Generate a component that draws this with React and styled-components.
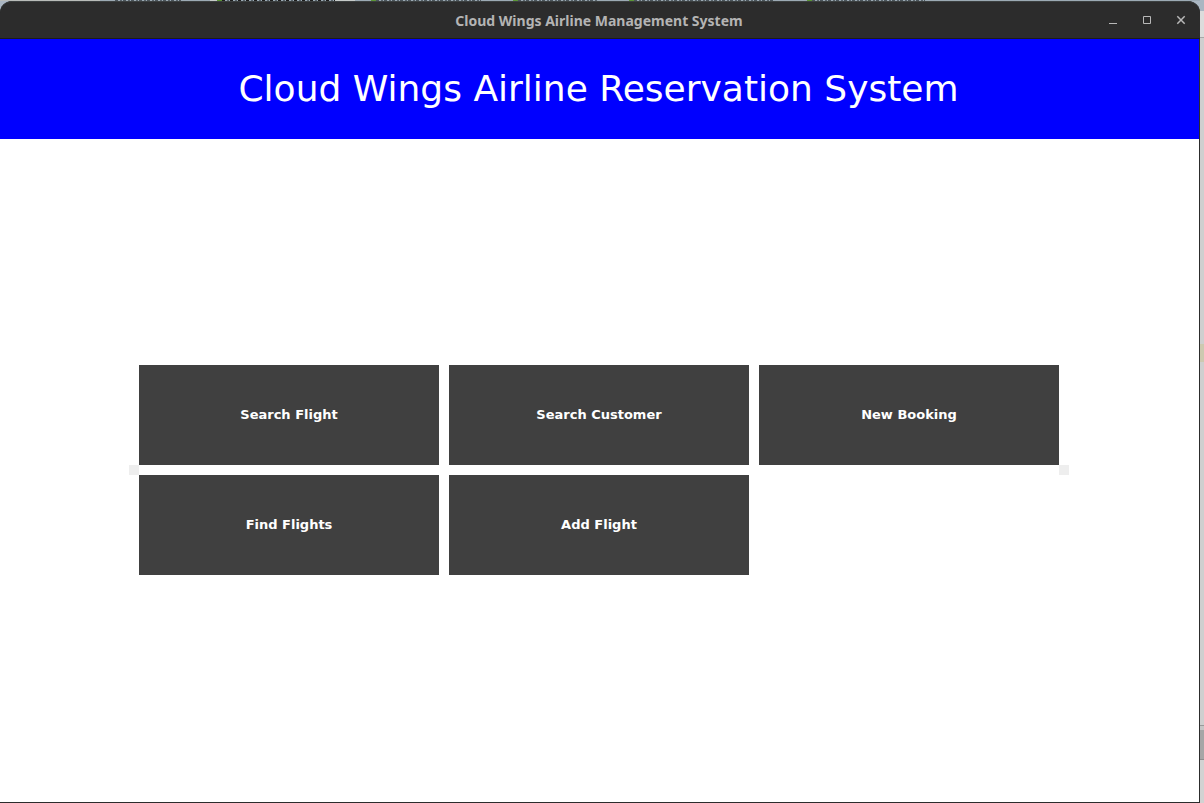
import React from "react";
import styled, { createGlobalStyle } from "styled-components";

const GlobalStyle = createGlobalStyle`
  * { box-sizing: border-box; }
  body { margin: 0; }
`;

const Desktop = styled.div`
  min-height: 100vh;
  display: flex;
  flex-direction: column;
  padding-right: 4px;
  background: linear-gradient(
    #aab6c2 0 11px,
    #dcdcdc 11px 37px,
    #a8a8a8 37px 38px,
    #cfcfcf 38px 344px,
    #cdc9b0 344px 362px,
    #cfcfcf 362px 725px,
    #9a9a9a 725px 726px,
    #c6c6c6 726px 730px,
    #a6a6a6 730px 759px,
    #8e8e8e 759px 760px,
    #d2d2d2 760px
  );
`;

const TabStrip = styled.div`
  display: flex;
  height: 1px;
  padding-left: 115px;
  background: linear-gradient(90deg, #b9bcb9 0 100px, #9caab4 100px 210px, #c6cbc9 210px 355px, #9caab4 355px);
`;

const TabTrace = styled.span`
  width: ${(p) => p.$width}px;
  margin-right: ${(p) => p.$gap}px;
  background: repeating-linear-gradient(
    90deg,
    ${(p) => (p.$active ? "#1d1d1d" : "#4c565c")} 0 3px,
    #9caab4 3px 5px,
    #59646b 5px 7px,
    #9caab4 7px 8px
  );
  border-left: ${(p) => (p.$marked ? "5px solid #5c9636" : "none")};
`;

const Window = styled.div`
  flex: 1;
  display: flex;
  flex-direction: column;
  background: #2c2c2c;
  border-radius: 12px 12px 0 0;
`;

const TitleBar = styled.header`
  display: grid;
  grid-template-columns: 1fr auto 1fr;
  align-items: center;
  height: 38px;
  padding: 0 10px 0 8px;
  border-top: 1px solid #3c4040;
  border-bottom: 1px solid #1c1c1c;
  border-radius: 12px 12px 0 0;
  background: #2c2c2c;
`;

const WindowTitle = styled.span`
  grid-column: 2;
  color: #b4b4b4;
  font: bold 14px/20px "Noto Sans", sans-serif;
  padding-top: 2px;
  white-space: nowrap;
`;

const WindowControls = styled.div`
  display: flex;
  justify-content: flex-end;
  gap: 16px;
`;

const ControlButton = styled.button`
  display: flex;
  width: 18px;
  height: 18px;
  align-items: center;
  justify-content: center;
  padding: 0;
  border: 0;
  background: none;
  color: #b8b8b8;
`;

const Content = styled.div`
  flex: 1;
  display: flex;
  flex-direction: column;
  margin: 0 1px 1px 0;
  background: #fff;
`;

const Banner = styled.div`
  display: flex;
  align-items: center;
  justify-content: center;
  height: 100px;
  padding-right: 2px;
  background: #00f;
`;

const Heading = styled.h1`
  margin: 0;
  color: #fff;
  font: 36px/42px "DejaVu Sans", sans-serif;
  white-space: nowrap;
`;

const Menu = styled.main`
  flex: 1;
  display: flex;
  align-items: center;
  justify-content: center;
  padding: 0 1px 1px 0;
`;

const Spacer = styled.span`
  width: 10px;
  height: 10px;
  background: #eee;
`;

const ActionGrid = styled.div`
  display: grid;
  grid-template-columns: repeat(3, 300px);
  grid-auto-rows: 100px;
  gap: 10px;
`;

const ActionButton = styled.button`
  padding: 0;
  border: 0;
  background: #404040;
  color: #fff;
  font: bold 13px/16px "DejaVu Sans", sans-serif;
`;

const tabs = [
  { width: 66, gap: 36 },
  { width: 118, gap: 36, marked: true, active: true },
  { width: 110, gap: 32, marked: true },
  { width: 84, gap: 32, marked: true },
  { width: 146, gap: 32, marked: true },
  { width: 118, gap: 0, marked: true },
];

const actions = ["Search Flight", "Search Customer", "New Booking", "Find Flights", "Add Flight"];

const controls = [
  { name: "Minimize", shape: <path d="M1 8.5h8" /> },
  { name: "Maximize", shape: <path d="M1.5 1.5h7v7h-7z" /> },
  { name: "Close", shape: <path d="M1.3 1.3l7.4 7.4M8.7 1.3l-7.4 7.4" strokeWidth="1.5" /> },
];

export default function App() {
  return (
    <Desktop>
      <GlobalStyle />
      <TabStrip>
        {tabs.map((tab, i) => (
          <TabTrace key={i} $width={tab.width} $gap={tab.gap} $marked={tab.marked} $active={tab.active} />
        ))}
      </TabStrip>
      <Window>
        <TitleBar>
          <WindowTitle>Cloud Wings Airline Management System</WindowTitle>
          <WindowControls>
            {controls.map((c) => (
              <ControlButton key={c.name} type="button" aria-label={c.name}>
                <svg width="10" height="10" viewBox="0 0 10 10" fill="none" stroke="currentColor">
                  {c.shape}
                </svg>
              </ControlButton>
            ))}
          </WindowControls>
        </TitleBar>
        <Content>
          <Banner>
            <Heading>Cloud Wings Airline Reservation System</Heading>
          </Banner>
          <Menu>
            <Spacer />
            <ActionGrid>
              {actions.map((label) => (
                <ActionButton key={label} type="button">
                  {label}
                </ActionButton>
              ))}
            </ActionGrid>
            <Spacer />
          </Menu>
        </Content>
      </Window>
    </Desktop>
  );
}
